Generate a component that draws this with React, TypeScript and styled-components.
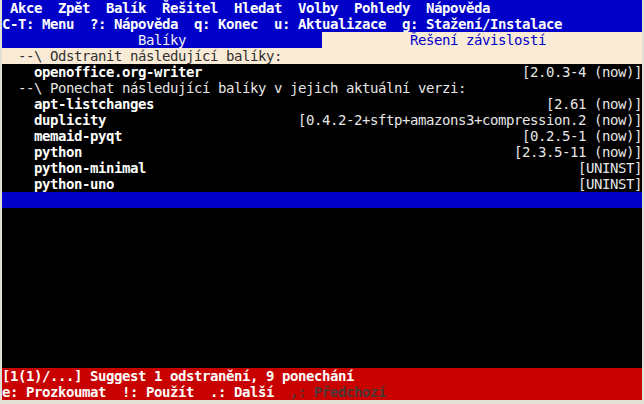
import React from 'react'
import styled, { createGlobalStyle } from 'styled-components'

const GlobalStyle = createGlobalStyle`
  html, body {
    margin: 0;
    padding: 0;
    background: #e2dfd4;
  }
`

const COL = 8

const Screen = styled.div`
  width: 640px;
  height: 400px;
  margin-left: 2px;
  display: flex;
  flex-direction: column;
  background: #000000;
  font-family: "DejaVu Sans Mono", "Liberation Mono", monospace;
  font-size: 14px;
  letter-spacing: -0.43px;
  line-height: 16px;
  white-space: pre;
  overflow: hidden;
`

const BlueBar = styled.div`
  height: 16px;
  display: flex;
  gap: 16px;
  background: #0000c8;
  color: #ffffff;
  font-weight: 700;
`

const Menu = styled(BlueBar)`
  padding-left: 8px;
`

const TabRow = styled.div`
  height: 16px;
  display: grid;
  grid-template-columns: 1fr 1fr;
`

const Tab = styled.div<{ $active?: boolean; $pad: number }>`
  padding-left: ${(p) => p.$pad * COL}px;
  background: ${(p) => (p.$active ? '#0000c8' : '#faebd7')};
  color: ${(p) => (p.$active ? '#f0f0f0' : '#0000c8')};
`

const TreeRow = styled.div<{ $indent: number; $selected?: boolean }>`
  height: 16px;
  display: flex;
  justify-content: space-between;
  padding-left: ${(p) => p.$indent * COL}px;
  background: ${(p) => (p.$selected ? '#faebd7' : '#000000')};
  color: ${(p) => (p.$selected ? '#303030' : '#e6e6e6')};
`

const PkgName = styled.span`
  color: #ffffff;
  font-weight: 700;
`

const Version = styled.span`
  color: #e6e6e6;
`

const CursorBar = styled.div`
  height: 16px;
  background: #0000c8;
`

const Filler = styled.div`
  flex: 1;
  background: #000000;
`

const StatusLine = styled.div`
  height: 16px;
  display: flex;
  gap: 16px;
  background: #c80000;
  color: #ffffff;
  font-weight: 700;
`

const Key = styled.span<{ $dim?: boolean }>`
  color: ${(p) => (p.$dim ? '#4a3a3a' : '#ffffff')};
`

const menu = ['Akce', 'Zpět', 'Balík', 'Řešitel', 'Hledat', 'Volby', 'Pohledy', 'Nápověda']
const hints = ['C-T: Menu', '?: Nápověda', 'q: Konec', 'u: Aktualizace', 'g: Stažení/Instalace']

const tabs = [
  { label: 'Balíky', active: true },
  { label: 'Řešení závislostí', active: false },
]

const keep = [
  ['apt-listchanges', '[2.61 (now)]'],
  ['duplicity', '[0.4.2-2+sftp+amazons3+compression.2 (now)]'],
  ['memaid-pyqt', '[0.2.5-1 (now)]'],
  ['python', '[2.3.5-11 (now)]'],
  ['python-minimal', '[UNINST]'],
  ['python-uno', '[UNINST]'],
]

const App = () => {
  return (
    <>
      <GlobalStyle />
      <Screen>
        <Menu>
          {menu.map((m) => (
            <span key={m}>{m}</span>
          ))}
        </Menu>
        <BlueBar>
          {hints.map((h) => (
            <span key={h}>{h}</span>
          ))}
        </BlueBar>
        <TabRow>
          {tabs.map((t) => (
            <Tab key={t.label} $active={t.active} $pad={Math.floor((40 - t.label.length) / 2)}>
              {t.label}
            </Tab>
          ))}
        </TabRow>
        <TreeRow $indent={2} $selected>
          <span>--\ Odstranit následující balíky:</span>
        </TreeRow>
        <TreeRow $indent={4}>
          <PkgName>openoffice.org-writer</PkgName>
          <Version>[2.0.3-4 (now)]</Version>
        </TreeRow>
        <TreeRow $indent={2}>
          <span>--\ Ponechat následující balíky v jejich aktuální verzi:</span>
        </TreeRow>
        {keep.map(([name, ver]) => (
          <TreeRow key={name} $indent={4}>
            <PkgName>{name}</PkgName>
            <Version>{ver}</Version>
          </TreeRow>
        ))}
        <CursorBar />
        <Filler />
        <StatusLine>
          <span>[1(1)/...] Suggest 1 odstranění, 9 ponechání</span>
        </StatusLine>
        <StatusLine>
          <Key>e: Prozkoumat</Key>
          <Key>!: Použít</Key>
          <Key>.: Další</Key>
          <Key $dim>,: Předchozí</Key>
        </StatusLine>
      </Screen>
    </>
  )
}

export default App
